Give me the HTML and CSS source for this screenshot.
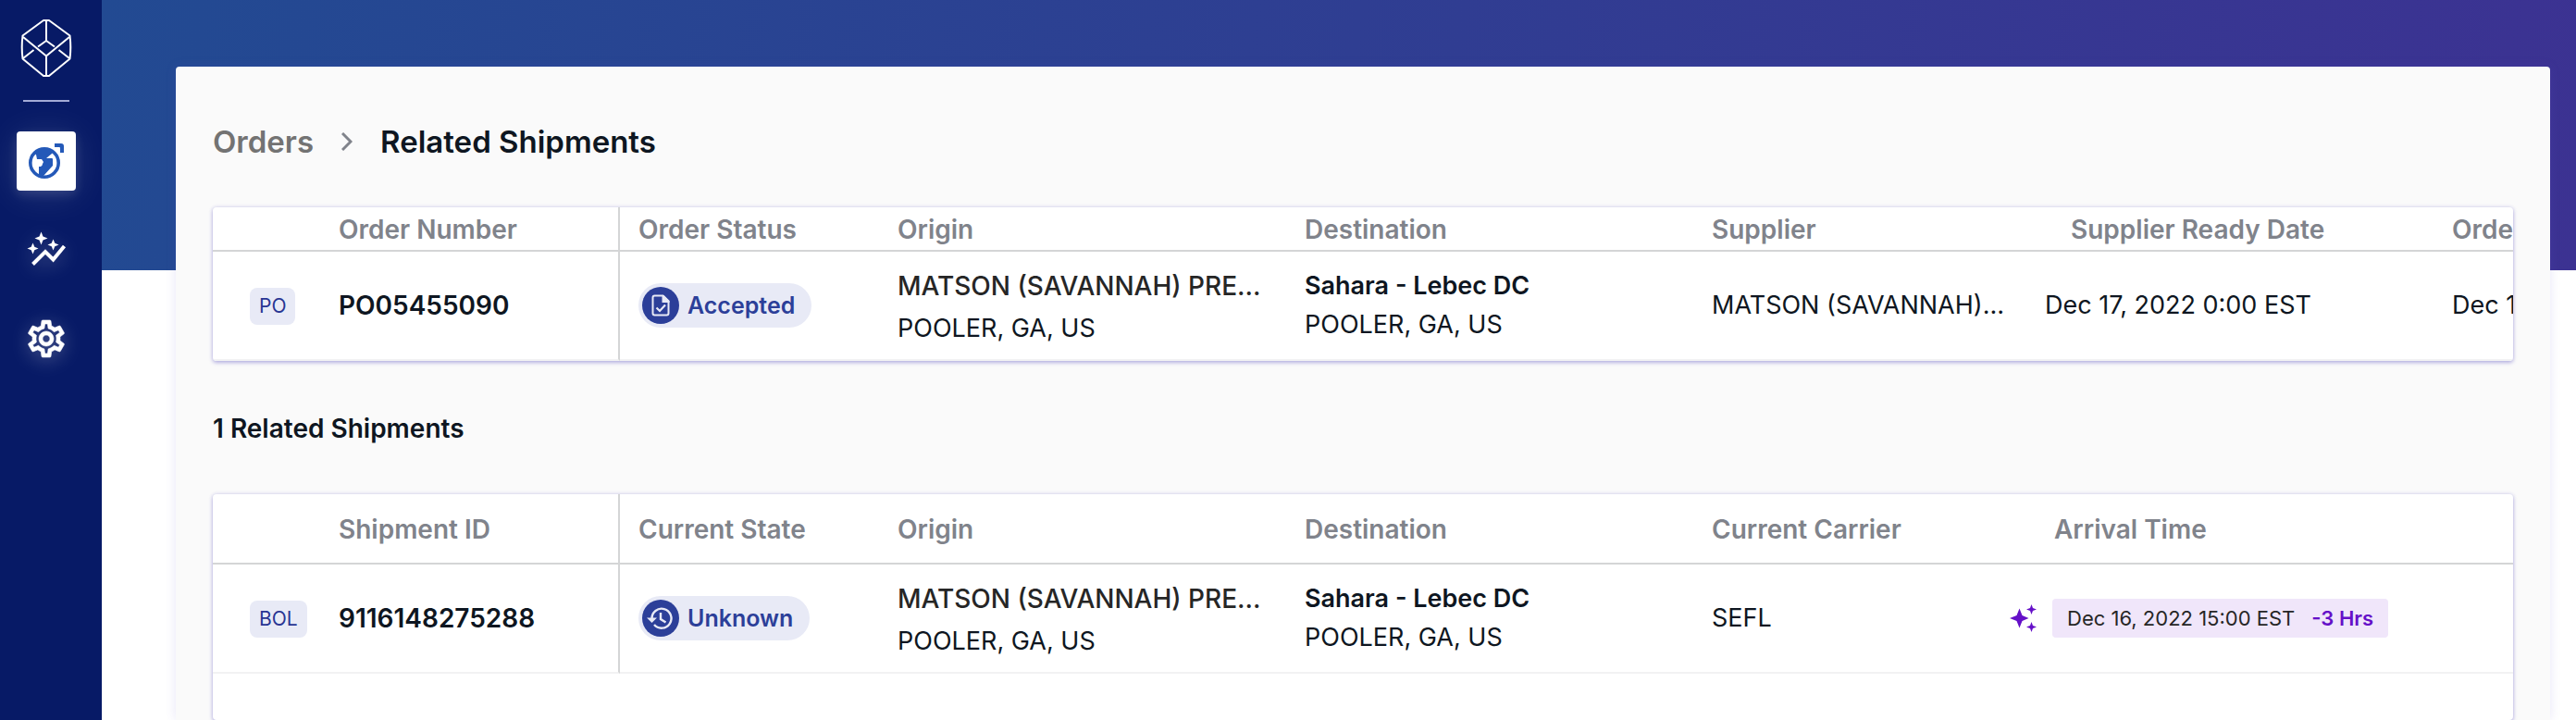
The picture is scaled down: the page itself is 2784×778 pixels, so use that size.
FILE: index.html
```html
<!DOCTYPE html>
<html lang="en">
<head>
<meta charset="utf-8">
<title>Related Shipments</title>
<link rel="stylesheet" href="styles.css">
</head>
<body>
<div class="app">
  <nav class="sidebar" aria-label="Main">
    <a class="logo" href="#" aria-label="Home">
      <svg width="56" height="64" viewBox="0 0 56 64" fill="none" stroke="#fff" stroke-width="2" stroke-linejoin="round">
        <path d="M25 2h6L53.500 18.500c1 8 1 17 0 25L31 62h-6L2.500 43.500c-1-8-1-17 0-25z"/>
        <path d="M28 2v22M28 40v22M3 20l25 20.500L53 20"/>
        <path d="M19 30.500 28 24l9 6.500M14.500 34 3 43M41.500 34 53 43"/>
      </svg>
    </a>
    <span class="sidebar-rule"></span>
    <a class="nav-link nav-link-active" href="#" aria-label="Network">
      <svg width="40" height="40" viewBox="0 0 40 40">
        <circle cx="18" cy="22" r="15.200" fill="#fff" stroke="#2459b8" stroke-width="3.600"/>
        <path fill="#2459b8" d="M7 12 12 7h12l4 3-2 2-6 5h6q1 0 1 1v7L17 36h-5V26h2q2-1 2-3l1-2-2-3h-5L9 13z"/>
        <path fill="#2459b8" d="M29 1h7q3 0 3 3v7h-4V6q0-1-1-1h-5z"/>
      </svg>
    </a>
    <a class="nav-link" href="#" aria-label="Insights">
      <svg class="nav-icon" width="40" height="38" viewBox="0 0 40 38" fill="#fff">
        <path d="M14.500-.5 16.500 4.500 21.500 6.500 16.500 8.500 14.500 13.500 12.500 8.500 7.500 6.500 12.500 4.500z"/>
        <path d="M27.500 7.500 29.300 11.700 33.500 13.500 29.300 15.300 27.500 19.500 25.700 15.300 21.500 13.500 25.700 11.700z"/>
        <path d="M5.500 11.500 7.300 15.700 11.500 17.500 7.300 19.300 5.500 23.500 3.700 19.300-.5 17.500 3.700 15.700z"/>
        <path d="M5.500 34.500 19 21l8.500 8.500L39.500 15" fill="none" stroke="#fff" stroke-width="4"/>
      </svg>
    </a>
    <a class="nav-link" href="#" aria-label="Settings">
      <svg class="nav-icon" width="48" height="48" viewBox="0 0 24 24" fill="#fff" stroke="#fff" stroke-width=".3"><path d="M19.430 12.980c.04-.32.07-.64.07-.98s-.03-.66-.07-.98l2.110-1.650c.19-.15.24-.42.12-.64l-2-3.460c-.09-.16-.26-.25-.44-.25-.06 0-.12.01-.17.03l-2.490 1c-.52-.4-1.080-.73-1.690-.98l-.38-2.650C14.460 2.180 14.250 2 14 2h-4c-.25 0-.46.18-.49.42l-.38 2.650c-.61.25-1.170.59-1.690.98l-2.490-1c-.06-.02-.12-.03-.18-.03-.17 0-.34.09-.43.25l-2 3.460c-.13.22-.07.49.12.64l2.110 1.650c-.04.32-.07.65-.07.98s.03.66.07.98l-2.110 1.650c-.19.15-.24.42-.12.64l2 3.460c.09.16.26.25.44.25.06 0 .12-.01.17-.03l2.490-1c.52.4 1.080.73 1.690.98l.38 2.650c.03.24.24.42.49.42h4c.25 0 .46-.18.49-.42l.38-2.650c.61-.25 1.170-.59 1.690-.98l2.490 1c.06.02.12.03.18.03.17 0 .34-.09.43-.25l2-3.460c.12-.22.07-.49-.12-.64l-2.110-1.650zm-1.980-1.710c.04.31.05.52.05.73 0 .21-.02.43-.05.73l-.14 1.130.89.7 1.080.84-.7 1.210-1.270-.51-1.040-.42-.9.68c-.43.32-.84.56-1.250.73l-1.060.43-.16 1.130-.2 1.350h-1.400l-.19-1.350-.16-1.130-1.060-.43c-.43-.18-.83-.41-1.230-.71l-.91-.7-1.060.43-1.270.51-.7-1.210 1.080-.84.89-.7-.14-1.130c-.03-.31-.05-.54-.05-.74s.02-.43.05-.73l.14-1.130-.89-.7-1.080-.84.7-1.210 1.270.51 1.040.42.9-.68c.43-.32.84-.56 1.250-.73l1.060-.43.16-1.130.2-1.350h1.390l.19 1.350.16 1.130 1.060.43c.43.18.83.41 1.230.71l.91.7 1.060-.43 1.270-.51.7 1.210-1.070.85-.89.7.14 1.130zM12 8c-2.210 0-4 1.790-4 4s1.790 4 4 4 4-1.790 4-4-1.790-4-4-4zm0 6c-1.100 0-2-.9-2-2s.9-2 2-2 2 .9 2 2-.9 2-2 2z"/></svg>
    </a>
  </nav>
  <main class="main">
    <section class="panel">
      <nav class="crumbs" aria-label="Breadcrumb">
        <a class="crumb-link" href="#">Orders</a>
        <svg class="crumb-arrow" width="12" height="20" viewBox="0 0 12 20" fill="none" stroke="#80838b" stroke-width="3"><path d="M1 1l9 9-9 9"/></svg>
        <h1 class="crumb-current">Related Shipments</h1>
      </nav>
      <div class="card">
        <table class="grid">
          <colgroup><col class="c-type"><col class="c-id"><col class="c-state"><col class="c-place"><col class="c-place"><col class="c-party"><col class="c-date"><col class="c-date"></colgroup>
          <thead class="head-compact"><tr><th></th><th class="pinned">Order Number</th><th>Order Status</th><th>Origin</th><th>Destination</th><th>Supplier</th><th class="indent">Supplier Ready Date</th><th>Order Date</th></tr></thead>
          <tbody><tr>
            <td class="type"><span class="badge">PO</span></td>
            <td class="pinned strong">PO05455090</td>
            <td><span class="status"><svg class="status-icon" width="40" height="40" viewBox="0 0 40 40"><circle cx="20" cy="20" r="20" fill="#2c3f99"/><path d="M13.500 9.500h9l6 6v13q0 2-2 2h-13q-2 0-2-2v-17q0-2 2-2z" fill="none" stroke="#e8eaf6" stroke-width="2"/><path d="M21.500 9h2l6 6v2h-8z" fill="#e8eaf6"/><path d="M15.500 22.500l3.500 3.500 6-6.500" fill="none" stroke="#e8eaf6" stroke-width="2.200"/></svg>Accepted</span></td>
            <td><div class="place"><span class="place-name">MATSON (SAVANNAH) PREMIUM</span><span>POOLER, GA, US</span></div></td>
            <td><div class="spot"><b class="strong">Sahara - Lebec DC</b><span>POOLER, GA, US</span></div></td>
            <td>MATSON (SAVANNAH) PREMIUM</td>
            <td>Dec 17, 2022 0:00 EST</td>
            <td class="cut">Dec 16, 2022 0:00 EST</td>
          </tr></tbody>
        </table>
      </div>
      <h2 class="subtitle">1 Related Shipments</h2>
      <div class="card card-fill">
        <table class="grid">
          <colgroup><col class="c-type"><col class="c-id"><col class="c-state"><col class="c-place"><col class="c-place"><col class="c-carrier"><col></colgroup>
          <thead><tr><th></th><th class="pinned">Shipment ID</th><th>Current State</th><th>Origin</th><th>Destination</th><th>Current Carrier</th><th class="indent-wide">Arrival Time</th></tr></thead>
          <tbody><tr>
            <td class="type"><span class="badge">BOL</span></td>
            <td class="pinned strong">9116148275288</td>
            <td><span class="status"><svg class="status-icon" width="40" height="40" viewBox="0 0 40 40"><circle cx="20" cy="20" r="20" fill="#2c3f99"/><g fill="none" stroke="#e8eaf6" stroke-width="2.400"><path d="M10.500 20.500A10.500 10.500 0 1 1 13 27"/><path d="M20 14v7l5.500 3.500"/></g><path d="M5 19.500h11L10.500 25z" fill="#e8eaf6"/></svg>Unknown</span></td>
            <td><div class="place"><span class="place-name">MATSON (SAVANNAH) PREMIUM</span><span>POOLER, GA, US</span></div></td>
            <td><div class="spot"><b class="strong">Sahara - Lebec DC</b><span>POOLER, GA, US</span></div></td>
            <td>SEFL</td>
            <td><div class="eta"><svg width="30" height="30" viewBox="0 0 30 30" fill="#6510c8"><path d="M10.500 4.500 13.500 12 20.500 15 13.500 18 10.500 25.500 7.500 18 0 15 7.500 12z"/><path d="M23.500 0 25 4 29 5.500 25 7 23.500 11 22 7 18 5.500 22 4z"/><path d="M23.500 19 25 23 29 24.500 25 26 23.500 30 22 26 18 24.500 22 23z"/></svg><span class="eta-pill">Dec 16, 2022 15:00 EST<b class="eta-delta">-3 Hrs</b></span></div></td>
          </tr></tbody>
        </table>
      </div>
    </section>
  </main>
</div>
</body>
</html>
```
FILE: styles.css
```css
* { box-sizing: border-box; }
body { margin: 0; font-family: Inter, "Liberation Sans", sans-serif; font-size: 28px; line-height: 42px; color: #0e1621; background: #fff; }
.app { display: flex; height: 100vh; overflow: hidden; }

.sidebar { width: 110px; padding: 20px 10px 0 0; display: flex; flex-direction: column; align-items: center; background: #071a66; }
.logo { display: flex; height: 64px; }
.sidebar-rule { width: 50px; height: 2px; margin: 24px 0 32px; background: #a3abd6; }
.nav-link { width: 64px; height: 64px; margin-bottom: 32px; display: flex; align-items: center; justify-content: center; border-radius: 4px; }
.nav-link-active { background: #fff; box-shadow: 0 4px 12px rgba(255, 255, 255, .14), 0 4px 40px rgba(255, 255, 255, .12); }
.nav-icon { overflow: visible; filter: drop-shadow(0 4px 10px rgba(255, 255, 255, .3)); }

.main { flex: 1; min-width: 0; padding: 72px 28px 0 80px; background: linear-gradient(100deg, #224a92, #3c3292) top / 100% 292px no-repeat; }
.panel { height: 100%; padding: 52px 40px 0; display: flex; flex-direction: column; background: #fafafa; border-radius: 4px 4px 0 0; box-shadow: 0 0 12px rgba(96, 80, 200, .15); }
.crumbs { display: flex; align-items: center; height: 58px; margin-bottom: 42px; }
.crumb-link { color: #737373; font-size: 33px; font-weight: 600; text-decoration: none; }
.crumb-arrow { margin: 0 30px; }
.crumb-current { margin: 0; font-size: 33px; font-weight: 600; }
.subtitle { margin: 52px 0 50px; font-size: 28px; font-weight: 600; }

.card { background: #fff; border-radius: 4px; overflow: hidden; box-shadow: 0 2px 4px rgba(80, 70, 190, .35), 0 0 4px rgba(80, 70, 190, .2); }
.card-fill { flex: 1; }
.grid { width: 100%; table-layout: fixed; border-collapse: separate; border-spacing: 0; }
.c-type { width: 116px; }
.c-id { width: 324px; }
.c-state { width: 280px; }
.c-place { width: 440px; }
.c-party { width: 360px; }
.c-date { width: 440px; }
.c-carrier { width: 322px; }
th { height: 76px; padding: 2px 20px 0; border-bottom: 2px solid #d4d5d6; color: #80838b; font-weight: 600; text-align: left; white-space: nowrap; }
.head-compact th { height: 48px; }
td { height: 118px; padding: 0 20px; border-bottom: 2px solid #f2f2f3; font-size: 27px; white-space: nowrap; overflow: hidden; text-overflow: ellipsis; }
.cut { text-overflow: clip; }
.pinned { border-right: 2px solid #d4d5d6; font-size: 28px; }
.indent { padding-left: 48px; }
.indent-wide { padding-left: 68px; }
.strong { font-weight: 600; }
.type { padding: 0 0 0 40px; }

.badge { display: inline-block; vertical-align: middle; padding: 0 10px; border-radius: 8px; background: #e8eaf6; color: #283593; font-size: 21px; line-height: 40px; }
.status { display: inline-flex; vertical-align: middle; align-items: center; gap: 9px; height: 48px; padding: 0 18px 0 4px; border-radius: 24px; background: #e8eaf6; color: #2c3f99; font-size: 25px; font-weight: 600; }
.place, .spot { display: flex; flex-direction: column; }
.place { gap: 4px; padding-top: 4px; }
.place-name { color: #262626; font-size: 28px; font-weight: 500; overflow: hidden; text-overflow: ellipsis; }
.eta { display: flex; align-items: center; gap: 16px; }
.eta-pill { padding: 0 16px; border-radius: 4px; background: #f0e6fa; color: #262626; font-size: 22px; }
.eta-delta { margin-left: 18px; color: #6510c8; font-weight: 600; }
```
